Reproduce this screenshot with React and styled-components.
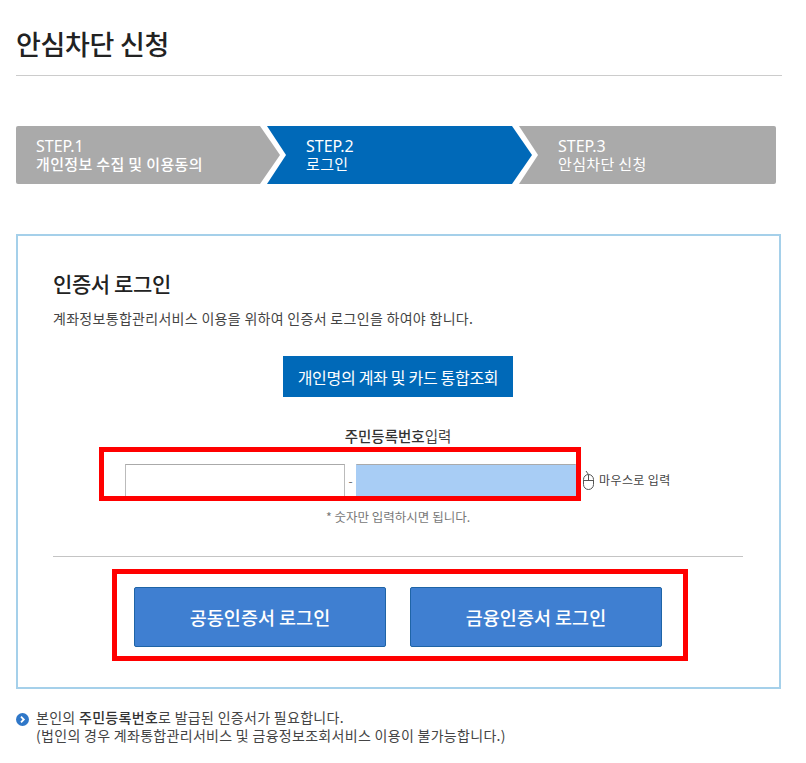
import React from "react";
import styled, { createGlobalStyle } from "styled-components";

const GlobalStyle = createGlobalStyle`
  html, body { margin: 0; padding: 0; background: #fff; }
  body { font-family: "Noto Sans CJK KR", "Noto Sans", sans-serif; color: #333; }
`;

const Page = styled.div`
  width: 806px;
  height: 763px;
  box-sizing: border-box;
  padding: 0 24px 0 16px;
  overflow: hidden;
`;

const Title = styled.h1`
  margin: 0;
  height: 75px;
  border-bottom: 1px solid #ccc;
  font-size: 27px;
  font-weight: 500;
  line-height: 88px;
  letter-spacing: -0.3px;
  color: #222;
`;

const Steps = styled.ol`
  display: flex;
  width: 760px;
  height: 58px;
  margin: 50px 0 0;
  padding: 0;
  list-style: none;
  border-radius: 2px;
  overflow: hidden;
`;

const Step = styled.li`
  position: relative;
  box-sizing: border-box;
  width: ${(p) => p.$width}px;
  padding: 11px 0 0 ${(p) => p.$inset}px;
  background: ${(p) => (p.$active ? "#0069b8" : "#aaaaaa")};
  color: #fff;
  font-size: 15px;
  z-index: ${(p) => 3 - p.$order};

  ${(p) =>
    p.$arrow &&
    `
    &::after {
      content: "";
      position: absolute;
      top: 0;
      left: 100%;
      width: 26px;
      height: 58px;
      background: #fff;
      clip-path: polygon(0 0, 7px 0, 26px 50%, 7px 100%, 0 100%);
    }
    &::before {
      content: "";
      position: absolute;
      top: 0;
      left: 100%;
      width: 20px;
      height: 58px;
      background: ${p.$active ? "#0069b8" : "#aaaaaa"};
      clip-path: polygon(0 0, 100% 50%, 0 100%);
      z-index: 1;
    }
  `}
`;

const StepNo = styled.div`
  font-family: "Noto Sans", sans-serif;
  font-size: 16px;
  line-height: 18px;
  height: 18px;
`;

const StepName = styled.div`
  height: 18px;
  line-height: 18px;
  font-weight: ${(p) => (p.$bold ? 500 : 400)};
  letter-spacing: 0.35px;
`;

const Card = styled.section`
  box-sizing: border-box;
  width: 765px;
  height: 455px;
  margin-top: 50px;
  padding: 35px 35px 0;
  border: 2px solid #a5d0ea;
`;

const CardTitle = styled.h2`
  margin: 0;
  font-size: 21px;
  font-weight: 500;
  line-height: 24px;
  letter-spacing: -0.4px;
  color: #222;
`;

const CardText = styled.p`
  margin: 13px 0 0;
  font-size: 14px;
  line-height: 20px;
  letter-spacing: 0.3px;
  color: #444;
`;

const Center = styled.div`
  display: flex;
  flex-direction: column;
  align-items: center;
  width: 690px;
`;

const LookupButton = styled.button`
  width: 230px;
  height: 41px;
  margin-top: 28px;
  padding: 0;
  border: 0;
  background: #0069b8;
  color: #fff;
  font-family: inherit;
  font-size: 16px;
  letter-spacing: -0.3px;
`;

const FieldLabel = styled.div`
  margin-top: 29px;
  font-size: 14.5px;
  line-height: 20px;
  color: #444;
`;

const FieldRow = styled.div`
  position: relative;
  display: flex;
  align-items: center;
  align-self: flex-start;
  height: 33px;
  margin: 18px 0 0 72px;
`;

const Input = styled.input`
  box-sizing: border-box;
  width: 220px;
  height: 33px;
  padding: 0;
  border: 1px solid ${(p) => (p.$masked ? "#a8cdf5" : "#bbb")};
  border-top-color: #aaa;
  background: ${(p) => (p.$masked ? "#a8cdf5" : "#fff")};
`;

const Dash = styled.span`
  width: 11px;
  font-size: 12px;
  text-align: center;
  color: #666;
`;

const MouseHint = styled.span`
  display: flex;
  align-items: center;
  gap: 3px;
  margin: 0 0 2px 6px;
  font-size: 12px;
  letter-spacing: 0.4px;
  white-space: nowrap;
  color: #444;
`;

const Highlight = styled.div`
  position: absolute;
  box-sizing: border-box;
  top: ${(p) => p.$top}px;
  left: ${(p) => p.$left}px;
  width: ${(p) => p.$w}px;
  height: ${(p) => p.$h}px;
  border: 5px solid #ff0000;
  pointer-events: none;
`;

const Hint = styled.div`
  margin-top: 12px;
  font-size: 12.5px;
  line-height: 16px;
  color: #777;
`;

const Divider = styled.hr`
  width: 690px;
  height: 1px;
  margin: 31px 0 0;
  border: 0;
  background: #c4c4c4;
`;

const LoginRow = styled.div`
  position: relative;
  display: flex;
  align-self: flex-start;
  gap: 24px;
  margin: 30px 0 0 81px;
`;

const LoginButton = styled.button`
  box-sizing: border-box;
  width: 252px;
  height: 60px;
  padding: 0;
  border: 1px solid #1f64a6;
  border-radius: 2px;
  background: #3f7fd1;
  color: #fff;
  font-family: inherit;
  font-size: 18.5px;
  font-weight: 500;
`;

const Note = styled.div`
  display: flex;
  gap: 7px;
  margin-top: 19px;
  font-size: 14px;
  line-height: 18px;
  letter-spacing: 0.3px;
  color: #444;
`;

const NoteIcon = styled.svg`
  flex: none;
  width: 13px;
  height: 13px;
  margin-top: 5px;
`;

const Strong = styled.strong`
  font-weight: 500;
  color: #333;
`;

const MouseIcon = () => (
  <svg width="14" height="20" viewBox="0 0 14 20" fill="none" stroke="#555" strokeWidth="1">
    <path d="M1.5 9.5a5 5 0 0 1 10 0v5a5 5 0 0 1-10 0z" />
    <path d="M1.5 10.5h10M6.5 5v5.5M6.5 4.5L4 1" />
  </svg>
);

export default function App() {
  return (
    <Page>
      <GlobalStyle />
      <Title>안심차단 신청</Title>
      <Steps>
        <Step $order={0} $width={244} $inset={20} $arrow>
          <StepNo>STEP.1</StepNo>
          <StepName $bold>개인정보 수집 및 이용동의</StepName>
        </Step>
        <Step $order={1} $width={252} $inset={46} $active $arrow>
          <StepNo>STEP.2</StepNo>
          <StepName>로그인</StepName>
        </Step>
        <Step $order={2} $width={264} $inset={46}>
          <StepNo>STEP.3</StepNo>
          <StepName>안심차단 신청</StepName>
        </Step>
      </Steps>
      <Card>
        <CardTitle>인증서 로그인</CardTitle>
        <CardText>계좌정보통합관리서비스 이용을 위하여 인증서 로그인을 하여야 합니다.</CardText>
        <Center>
          <LookupButton>개인명의 계좌 및 카드 통합조회</LookupButton>
          <FieldLabel>
            <Strong>주민등록번호</Strong>입력
          </FieldLabel>
          <FieldRow>
            <Input aria-label="주민등록번호 앞자리" />
            <Dash>-</Dash>
            <Input aria-label="주민등록번호 뒷자리" $masked />
            <MouseHint>
              <MouseIcon />
              마우스로 입력
            </MouseHint>
            <Highlight $top={-17} $left={-26} $w={482} $h={54} />
          </FieldRow>
          <Hint>* 숫자만 입력하시면 됩니다.</Hint>
          <Divider />
          <LoginRow>
            <LoginButton>공동인증서 로그인</LoginButton>
            <LoginButton>금융인증서 로그인</LoginButton>
            <Highlight $top={-18} $left={-22} $w={576} $h={92} />
          </LoginRow>
        </Center>
      </Card>
      <Note>
        <NoteIcon viewBox="0 0 13 13">
          <circle cx="6.5" cy="6.5" r="6.5" fill="#2f77c8" />
          <path d="M5 3.7l2.8 2.8L5 9.3" fill="none" stroke="#fff" strokeWidth="1.8" />
        </NoteIcon>
        <div>
          본인의 <Strong>주민등록번호</Strong>로 발급된 인증서가 필요합니다.
          <br />
          (법인의 경우 계좌통합관리서비스 및 금융정보조회서비스 이용이 불가능합니다.)
        </div>
      </Note>
    </Page>
  );
}
